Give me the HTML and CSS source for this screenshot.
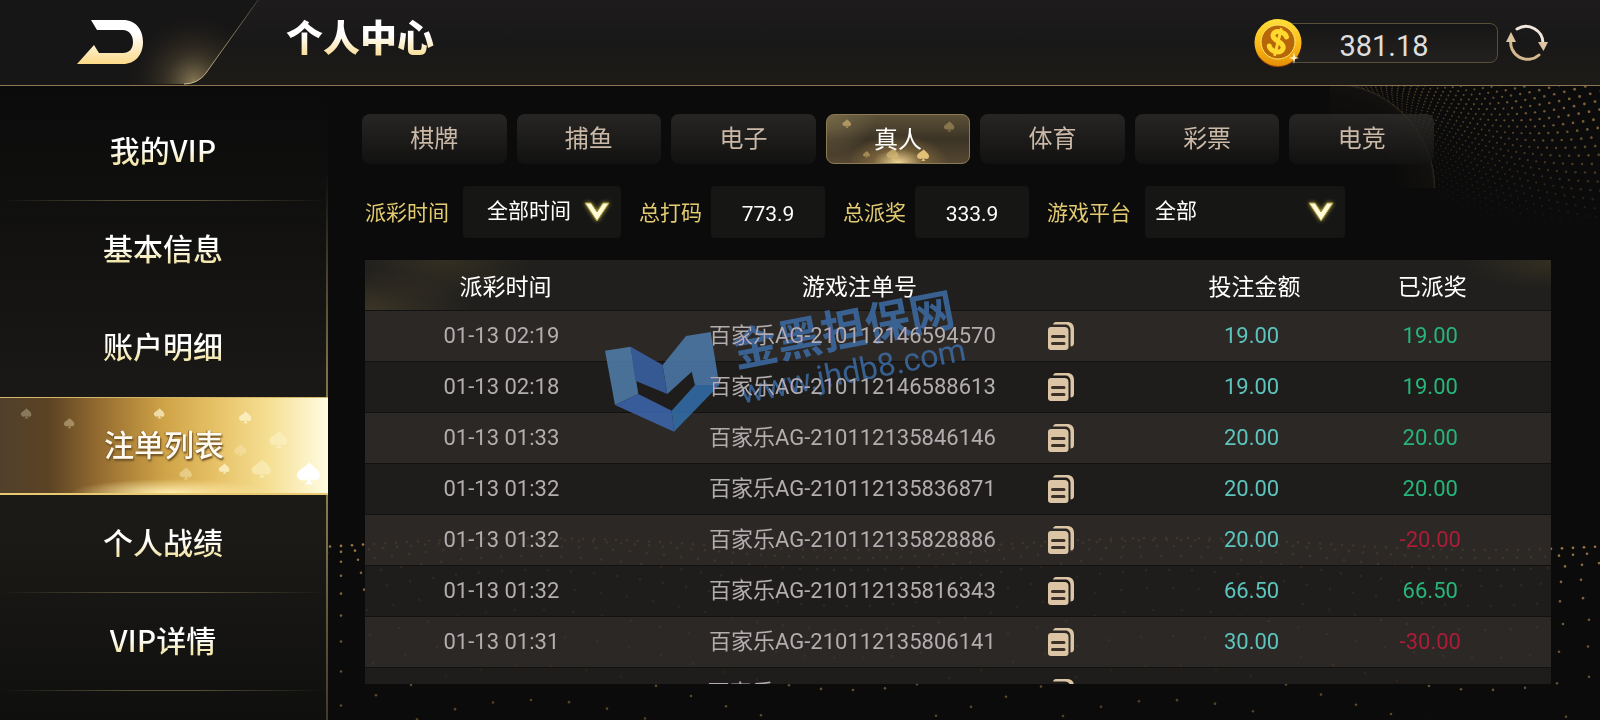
FILE: index.html
```html
<!DOCTYPE html>
<html lang="zh-CN">
<head>
    <meta charset="UTF-8">
    <meta name="viewport" content="width=device-width, initial-scale=1.0">
    <title>个人中心</title>
    <link rel="stylesheet" href="styles.css">
</head>
<body>
    <!-- Shared shapes -->
    <svg class="defs" width="0" height="0" aria-hidden="true">
        <linearGradient id="gold" x1="0" y1="0" x2="0" y2="1">
            <stop offset="0.3" stop-color="#ffffff"/>
            <stop offset="1" stop-color="#fbd987"/>
        </linearGradient>
        <symbol id="spade" viewBox="0 0 20 20">
            <path d="M11 1C13 4 19 7 19 11.500C19 15.500 14.500 16.500 11.800 14.200C12 16 12.800 17.500 14 18.500H7.500C9 17.500 9.600 16 9.800 14.200C7 16.500 1.500 15.500 1.500 11C1.500 7 8.500 5 11 1Z"/>
        </symbol>
        <symbol id="chevron" viewBox="0 0 26 20">
            <path d="M1 1H7L13 10L19 1H25L13 19Z" fill="#fffbd8" stroke="#a89a3c" stroke-width="1"/>
        </symbol>
        <symbol id="copy" viewBox="0 0 28 30">
            <path d="M6 3.500C6.500 1.500 8 1 10 1H20C24.500 1 27 3.500 27 8V22C27 24.500 25.500 25.500 23.500 25.500V9C23.500 5.500 21 3.500 18 3.500Z" fill="#dcc5a5"/>
            <path d="M4 6H17.500C20 6 21.500 7.500 21.500 10V26C21.500 28 20.500 29 18.500 29H4C2 29 1 28 1 26V9C1 7 2 6 4 6Z" fill="#dcc5a5"/>
            <path d="M5.500 15.500H17M5.500 22.500H17" stroke="#3c3128" stroke-width="3" stroke-linecap="round"/>
        </symbol>
    </svg>

    <canvas id="dots" class="dots"></canvas>

    <header class="header">
        <a href="#" class="back" aria-label="返回">
            <svg width="260" height="86" viewBox="0 0 260 86">
                <defs>
                    <radialGradient id="cornerGlow" gradientUnits="userSpaceOnUse" cx="194" cy="82" r="66">
                        <stop offset="0" stop-color="#9a8860" stop-opacity="0.85"/>
                        <stop offset="0.45" stop-color="#5f5338" stop-opacity="0.4"/>
                        <stop offset="1" stop-color="#26231c" stop-opacity="0"/>
                    </radialGradient>
                    <linearGradient id="edge" gradientUnits="userSpaceOnUse" x1="258" y1="0" x2="190" y2="84">
                        <stop offset="0" stop-color="#453d30"/>
                        <stop offset="1" stop-color="#d6c496"/>
                    </linearGradient>
                </defs>
                <path d="M0 0H258L206 73Q198 84 184 84H0Z" fill="#171616"/>
                <path d="M0 0H258L206 73Q198 84 184 84H0Z" fill="url(#cornerGlow)"/>
                <path d="M258 0L206 73Q198 84 184 84" fill="none" stroke="url(#edge)"/>
                <path d="M91 20H123C136 20 143 30 143 42C143 55 135 64 123 64H77L94 45L99 53H123C129 53 133 49 133 42C133 35 129 30 123 30H97Z" fill="url(#gold)"/>
            </svg>
        </a>
        <h1 class="title">个人中心</h1>
        <div class="balance">
            <svg class="coin" width="50" height="50" viewBox="0 0 50 50" aria-hidden="true">
                <defs>
                    <linearGradient id="coinRim" x1="0" y1="0" x2="0" y2="1">
                        <stop offset="0" stop-color="#ffe03a"/>
                        <stop offset="0.6" stop-color="#f9b413"/>
                        <stop offset="1" stop-color="#e39008"/>
                    </linearGradient>
                </defs>
                <ellipse cx="25" cy="27" rx="23" ry="22" fill="#a84d05"/>
                <circle cx="25" cy="24.500" r="23.500" fill="url(#coinRim)"/>
                <circle cx="25" cy="24" r="17" fill="#b8660a" stroke="#ffe765"/>
                <g transform="rotate(14 25 24)" fill="none" stroke="#ffd92e" stroke-linecap="round">
                    <path d="M32 17C29 12 18 12.500 18.500 18.500C19 24.500 31.500 22.500 31.500 29C31.500 35.500 20 35 17.500 30" stroke-width="5"/>
                    <path d="M25 11V37" stroke-width="3"/>
                </g>
                <path d="M41 34L42 39L46 40L42 41L41 46L40 41L36 40L40 39Z" fill="#fff8cf"/>
            </svg>
            <span class="amount">381.18</span>
        </div>
        <button type="button" class="refresh" aria-label="刷新">
            <svg width="44" height="40" viewBox="0 0 44 40">
                <path d="M12 6A17 17 0 0 1 38 21" fill="none" stroke="#f2e6dc" stroke-width="3" stroke-linecap="round"/>
                <path d="M34 32A17 17 0 0 1 6 16" fill="none" stroke="#d3b78f" stroke-width="3" stroke-linecap="round"/>
                <path d="M33 19H43L38.500 28Z" fill="#ddc4a0"/>
                <path d="M1 19L6 9L11 19Z" fill="#ddc4a0"/>
            </svg>
        </button>
    </header>

    <div class="layout">
        <nav class="sidebar">
            <a href="#" class="menu-item"><span>我的VIP</span></a>
            <a href="#" class="menu-item plain"><span>基本信息</span></a>
            <a href="#" class="menu-item plain"><span>账户明细</span></a>
            <a href="#" class="menu-item active" aria-current="page">
                <svg class="spades" viewBox="0 0 328 98" preserveAspectRatio="none" fill="#fff6cf" aria-hidden="true">
                    <use href="#spade" x="20" y="10" width="12" height="12" opacity="0.3"/>
                    <use href="#spade" x="63" y="20" width="12" height="12" opacity="0.35"/>
                    <use href="#spade" x="153" y="10" width="12" height="12" opacity="0.7"/>
                    <use href="#spade" x="238" y="13" width="14" height="14" opacity="0.75"/>
                    <use href="#spade" x="268" y="33" width="20" height="20" opacity="0.5"/>
                    <use href="#spade" x="233" y="46" width="14" height="16" opacity="0.3"/>
                    <use href="#spade" x="178" y="71" width="15" height="14" opacity="0.4"/>
                    <use href="#spade" x="218" y="67" width="12" height="12" opacity="0.75"/>
                    <use href="#spade" x="250" y="62" width="22" height="22" opacity="0.5"/>
                    <use href="#spade" x="295" y="65" width="26" height="26" fill="#ffffff"/>
                </svg>
                <span>注单列表</span>
            </a>
            <a href="#" class="menu-item"><span>个人战绩</span></a>
            <a href="#" class="menu-item"><span>VIP详情</span></a>
        </nav>

        <main class="content">
            <div class="tabs">
                <button type="button" class="tab">棋牌</button>
                <button type="button" class="tab">捕鱼</button>
                <button type="button" class="tab">电子</button>
                <button type="button" class="tab active">
                    <svg class="spades" viewBox="0 0 145 50" preserveAspectRatio="none" fill="#e2c078" aria-hidden="true">
                        <use href="#spade" x="15" y="4" width="10" height="10" opacity="0.6"/>
                        <use href="#spade" x="118" y="6" width="12" height="12" opacity="0.4"/>
                        <use href="#spade" x="36" y="37" width="8" height="8" opacity="0.5"/>
                        <use href="#spade" x="59" y="34" width="15" height="14" opacity="0.6"/>
                        <use href="#spade" x="90" y="35" width="15" height="14"/>
                    </svg>
                    真人
                </button>
                <button type="button" class="tab">体育</button>
                <button type="button" class="tab">彩票</button>
                <button type="button" class="tab">电竞</button>
            </div>

            <form class="filters">
                <div class="field">
                    <label for="time">派彩时间</label>
                    <div class="select time-select">
                        <select id="time">
                            <option>全部时间</option>
                        </select>
                        <svg class="arrow" width="26" height="20"><use href="#chevron"/></svg>
                    </div>
                </div>
                <div class="field">
                    <label for="bet">总打码</label>
                    <input type="text" id="bet" value="773.9" readonly>
                </div>
                <div class="field">
                    <label for="payout">总派奖</label>
                    <input type="text" id="payout" value="333.9" readonly>
                </div>
                <div class="field">
                    <label for="platform">游戏平台</label>
                    <div class="select platform-select">
                        <select id="platform">
                            <option>全部</option>
                        </select>
                        <svg class="arrow" width="26" height="20"><use href="#chevron"/></svg>
                    </div>
                </div>
            </form>

            <div class="table-wrap">
                <table>
                    <thead>
                        <tr>
                            <th class="col-time">派彩时间</th>
                            <th class="col-order">游戏注单号</th>
                            <th class="col-copy"></th>
                            <th class="col-bet">投注金额</th>
                            <th class="col-payout">已派奖</th>
                        </tr>
                    </thead>
                    <tbody>
                        <tr>
                            <td>01-13 02:19</td>
                            <td class="order">百家乐AG-210112146594570</td>
                            <td class="copy"><button type="button" aria-label="复制"><svg width="28" height="30"><use href="#copy"/></svg></button></td>
                            <td class="bet">19.00</td>
                            <td class="payout win">19.00</td>
                        </tr>
                        <tr>
                            <td>01-13 02:18</td>
                            <td class="order">百家乐AG-210112146588613</td>
                            <td class="copy"><button type="button" aria-label="复制"><svg width="28" height="30"><use href="#copy"/></svg></button></td>
                            <td class="bet">19.00</td>
                            <td class="payout win">19.00</td>
                        </tr>
                        <tr>
                            <td>01-13 01:33</td>
                            <td class="order">百家乐AG-210112135846146</td>
                            <td class="copy"><button type="button" aria-label="复制"><svg width="28" height="30"><use href="#copy"/></svg></button></td>
                            <td class="bet">20.00</td>
                            <td class="payout win">20.00</td>
                        </tr>
                        <tr>
                            <td>01-13 01:32</td>
                            <td class="order">百家乐AG-210112135836871</td>
                            <td class="copy"><button type="button" aria-label="复制"><svg width="28" height="30"><use href="#copy"/></svg></button></td>
                            <td class="bet">20.00</td>
                            <td class="payout win">20.00</td>
                        </tr>
                        <tr>
                            <td>01-13 01:32</td>
                            <td class="order">百家乐AG-210112135828886</td>
                            <td class="copy"><button type="button" aria-label="复制"><svg width="28" height="30"><use href="#copy"/></svg></button></td>
                            <td class="bet">20.00</td>
                            <td class="payout lose">-20.00</td>
                        </tr>
                        <tr>
                            <td>01-13 01:32</td>
                            <td class="order">百家乐AG-210112135816343</td>
                            <td class="copy"><button type="button" aria-label="复制"><svg width="28" height="30"><use href="#copy"/></svg></button></td>
                            <td class="bet">66.50</td>
                            <td class="payout win">66.50</td>
                        </tr>
                        <tr>
                            <td>01-13 01:31</td>
                            <td class="order">百家乐AG-210112135806141</td>
                            <td class="copy"><button type="button" aria-label="复制"><svg width="28" height="30"><use href="#copy"/></svg></button></td>
                            <td class="bet">30.00</td>
                            <td class="payout lose">-30.00</td>
                        </tr>
                        <tr>
                            <td>01-13 01:30</td>
                            <td class="order">百家乐</td>
                            <td class="copy"><button type="button" aria-label="复制"><svg width="28" height="30"><use href="#copy"/></svg></button></td>
                            <td class="bet"></td>
                            <td class="payout"></td>
                        </tr>
                    </tbody>
                </table>

                <!-- Watermark -->
                <svg class="watermark" width="400" height="150" viewBox="0 0 400 150" aria-hidden="true">
                    <g transform="scale(0.3333)">
                        <path d="M45 182L122 170L145 312L75 345Z" fill="#517fae"/>
                        <path d="M122 170L218 225L232 312L136 272Z" fill="#3b63a9"/>
                        <path d="M218 225L288 138L362 126L388 285H315L305 245L232 312Z" fill="#4c7cae"/>
                        <path d="M75 345L145 312L245 362L252 425Z" fill="#3c68b0"/>
                        <path d="M245 362L315 285H388L252 425Z" fill="#3270ae"/>
                    </g>
                    <g transform="rotate(-11 148 82)" fill="#3c6da6">
                        <text class="mark-name" x="147" y="77">金黑担保网</text>
                        <text class="mark-url" x="146" y="114">www.jhdb8.com</text>
                    </g>
                </svg>
            </div>
        </main>
    </div>

    <script src="script.js"></script>
</body>
</html>
```

FILE: styles.css
```css
/* Global Styles */
* {
    box-sizing: border-box;
    margin: 0;
    padding: 0;
}

body {
    display: flex;
    flex-direction: column;
    height: 100vh;
    overflow: hidden;
    position: relative;
    font-family: Roboto, "Noto Sans CJK SC", sans-serif;
    font-size: 22px;
    color: #ffffff;
    background-color: #0b0b0b;
}

a {
    color: inherit;
    text-decoration: none;
}

button, input, select {
    font: inherit;
    color: inherit;
    border: none;
    background: none;
}

button, select {
    cursor: pointer;
}

svg {
    display: block;
}

.defs {
    position: absolute;
}

.dots {
    position: absolute;
    left: 0;
    top: 0;
    width: 100%;
    height: 100%;
    z-index: -1;
}

/* Header */
.header {
    display: flex;
    align-items: center;
    flex: none;
    height: 86px;
    padding-right: 51px;
    background: linear-gradient(#1e1c1c, #191818 50%, #1c1b17);
    border-bottom: 1px solid #8b7450;
}

.title {
    margin-left: 26px;
    padding-bottom: 6px;
    font-size: 37px;
    font-weight: 900;
    line-height: 48px;
    background: linear-gradient(#ffffff 35%, #f8dc92 75%);
    background-clip: text;
    -webkit-background-clip: text;
    color: transparent;
}

.balance {
    display: flex;
    align-items: center;
    height: 40px;
    width: 236px;
    margin-left: auto;
    border: 1px solid #575039;
    border-radius: 8px;
    background: linear-gradient(#171616, #22211f);
}

.coin {
    margin-left: -10px;
}

.amount {
    flex: 1;
    padding-top: 6px;
    padding-right: 32px;
    text-align: center;
    font-size: 29px;
    line-height: 36px;
    color: #dedede;
}

.refresh {
    margin-left: 7px;
}

/* Layout */
.layout {
    display: flex;
    flex: 1;
    min-height: 0;
}

/* Sidebar */
.sidebar {
    flex: none;
    width: 328px;
    padding-top: 17px;
    background: linear-gradient(rgba(11, 11, 11, 0), #191816 45%, #1b1a17 70%, #0f0f0e);
    border-right: 2px solid;
    border-image: linear-gradient(transparent 14%, #7a6f48 45%, #857a50 65%, #3f3a28) 1;
}

.menu-item {
    display: flex;
    align-items: center;
    justify-content: center;
    position: relative;
    height: 98px;
    padding-bottom: 6px;
    font-family: "Noto Sans CJK SC", sans-serif;
    font-size: 30px;
    font-weight: 500;
}

.menu-item span {
    position: relative;
    background: linear-gradient(#ffffff 50%, #f3e7ae 80%);
    background-clip: text;
    -webkit-background-clip: text;
    color: transparent;
}

.menu-item::after {
    content: "";
    position: absolute;
    left: 0;
    right: 0;
    bottom: 0;
    height: 1px;
    background: linear-gradient(90deg, transparent, #575138 40%, #575138 60%, transparent);
}

.menu-item.plain::after, .menu-item.active::after {
    display: none;
}

.menu-item.active {
    margin-right: -2px;
    background:
        radial-gradient(ellipse 100px 14px at 52% 100%, #ffeeb0, transparent),
        linear-gradient(90deg, #50402b, #5c4324 15%, #946b30 30%, #cfa347 50%, #e6c065 65%, #f5df93 82%, #fffce2);
    border-top: 1px solid #d5b669;
    border-bottom: 2px solid #e9c972;
}

.menu-item.active span {
    background: none;
    color: #fffaf0;
    text-shadow: 1px 2px 2px #6b4d22, -1px 0 1px #8a6734;
}

.spades {
    position: absolute;
    left: 0;
    top: 0;
    width: 100%;
    height: 100%;
}

/* Content */
.content {
    display: flex;
    flex-direction: column;
    flex: 1;
    gap: 22px;
    min-width: 0;
    padding: 28px 49px 36px 34px;
}

.tabs {
    display: grid;
    grid-template-columns: repeat(7, 1fr);
    gap: 10px;
    max-width: 1072px;
}

.tab {
    position: relative;
    height: 50px;
    border-radius: 8px;
    font-size: 24px;
    line-height: 50px;
    color: #cbb9a7;
    background: linear-gradient(rgba(50, 48, 46, 0.75), rgba(20, 20, 19, 0.75));
}

.tab.active {
    color: #ffffff;
    border: 1px solid #8b7a54;
    overflow: hidden;
    background:
        radial-gradient(ellipse 50px 28px at 50% 100%, #f3d897, rgba(155, 125, 70, 0.5) 50%, transparent),
        radial-gradient(ellipse 50px 40px at 0 0, #756847, transparent),
        linear-gradient(#5c5138, #3b3325 50%, #554731);
}

/* Filters */
.filters {
    display: flex;
    align-items: center;
    gap: 18px;
    padding-left: 3px;
    font-size: 21px;
}

.field {
    display: flex;
    align-items: center;
    gap: 9px;
}

.field:first-child, .field:last-child {
    gap: 14px;
}

.field label {
    padding-bottom: 2px;
    color: #e3cb70;
    white-space: nowrap;
}

.field input {
    width: 114px;
    height: 52px;
    padding-top: 4px;
    text-align: center;
    border-radius: 4px;
    background-color: #161615;
}

.select {
    position: relative;
}

.select select {
    appearance: none;
    width: 100%;
    height: 52px;
    padding-bottom: 2px;
    border-radius: 4px;
    background-color: #161615;
}

.time-select {
    width: 158px;
}

.time-select select {
    padding-left: 24px;
}

.platform-select {
    width: 200px;
}

.platform-select select {
    padding-left: 10px;
}

.arrow {
    position: absolute;
    right: 11px;
    top: 16px;
    filter: drop-shadow(0 0 2px #a89a3c);
    pointer-events: none;
}

/* Table */
.table-wrap {
    position: relative;
    flex: 1;
    min-height: 0;
    margin-left: 3px;
    overflow: hidden;
}

table {
    width: 100%;
    table-layout: fixed;
    border-collapse: collapse;
}

thead tr {
    background:
        radial-gradient(ellipse 90px 40px at 80px 0, rgba(80, 70, 40, 0.4), transparent),
        radial-gradient(ellipse 110px 40px at 0 100%, rgba(100, 86, 50, 0.4), transparent),
        radial-gradient(ellipse 90px 30px at 100% 0, rgba(80, 70, 40, 0.4), transparent),
        #201f1d;
}

th, td {
    text-align: center;
    border-bottom: 1px solid #131212;
}

th {
    height: 50px;
    font-size: 23px;
    font-weight: 400;
}

td {
    height: 51px;
    color: #b3adb0;
}

tbody tr:nth-child(odd) {
    background-color: rgba(49, 44, 41, 0.88);
}

tbody tr:nth-child(even) {
    background-color: rgba(33, 32, 30, 0.88);
}

.col-time {
    width: 23%;
    padding-left: 8px;
}

.col-order {
    width: 34%;
    padding-left: 40px;
}

.col-copy {
    width: 10%;
}

.col-bet {
    width: 15%;
    padding-left: 12px;
}

.col-payout {
    width: 18%;
    padding-right: 24px;
}

.order {
    padding-left: 26px;
    padding-bottom: 5px;
}

tr:last-child .order {
    padding-right: 224px;
}

.copy {
    text-align: left;
}

.copy button {
    display: block;
    margin-left: 6px;
}

.bet {
    padding-left: 6px;
    color: #5cc4bd;
}

.payout {
    padding-right: 28px;
}

.win {
    color: #27b57a;
}

.lose {
    color: #ab1d38;
}

.watermark {
    position: absolute;
    left: 225px;
    top: 30px;
    opacity: 0.85;
    mix-blend-mode: lighten;
    pointer-events: none;
}

.mark-name {
    font-size: 45px;
    font-weight: 700;
}

.mark-url {
    font-size: 32px;
}
```

FILE: script.js
```javascript
// Draws the gold particle background
const canvas = document.getElementById('dots');
const ctx = canvas.getContext('2d');

function dot(x, y, r, alpha) {
    ctx.fillStyle = 'rgba(200, 155, 85, ' + alpha + ')';
    ctx.beginPath();
    ctx.arc(x, y, r, 0, Math.PI * 2);
    ctx.fill();
}

function draw() {
    const w = canvas.width = canvas.clientWidth;
    const h = canvas.height = canvas.clientHeight;

    // Curved edge that the fan starts from
    const edge = ctx.createRadialGradient(w - 270, 188, 60, w - 270, 188, 105);
    edge.addColorStop(0, 'rgba(60, 52, 38, 0)');
    edge.addColorStop(0.95, 'rgba(60, 52, 38, 0.15)');
    edge.addColorStop(1, 'rgba(90, 78, 58, 0.5)');
    ctx.fillStyle = edge;
    ctx.beginPath();
    ctx.moveTo(w - 270, 188);
    ctx.arc(w - 270, 188, 105, -Math.PI / 2, 0);
    ctx.fill();

    // Fan of dots in the top right corner
    for (let row = 0; row < 30; row++) {
        const angle = (row / 29) * Math.PI / 2;
        const startX = w - 270 + Math.sin(angle) * 105;
        const startY = 188 - Math.cos(angle) * 105;
        for (let i = 0; i < 44; i++) {
            const x = startX + i * 4 + i * i * 0.12;
            const t = (x - startX) / 220;
            const y = startY + t * (row * 5 - 60) + Math.sin(t * 3) * 16;
            const fade = Math.max(0, 1 - Math.max(0, y - 120) / 110);
            dot(x, y, 0.7 + t * 0.8, Math.min(0.6, 0.25 + t * 0.4) * fade);
        }
    }

    // Wave of dots along the bottom
    for (let row = 0; row < 10; row++) {
        const step = 11 + row * 3;
        for (let x = 330 - row * 3; x < w; x += step) {
            const dip = Math.sin((x - 330) / (w - 330) * Math.PI * 2 - 1);
            const y = h - 182 + row * row * 2 + dip * dip * (12 + row * 6);
            dot(x, y, 1.3, 0.75 - row * 0.04);
        }
    }
}

draw();
window.addEventListener('resize', draw);
```
